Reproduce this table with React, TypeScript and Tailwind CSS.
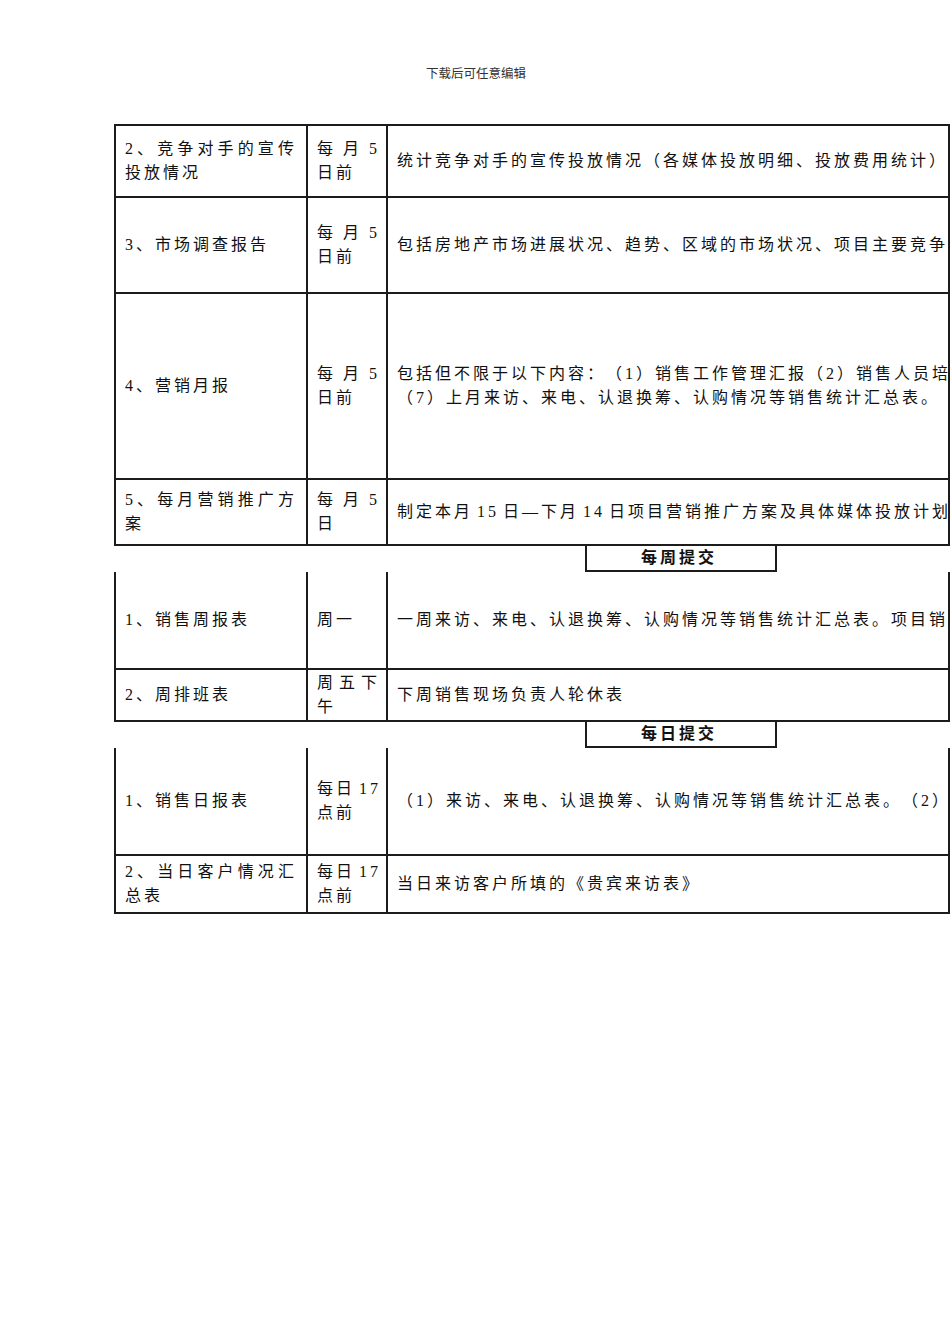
import React from "react";

function J({ t }: { t: string }) {
  return (
    <div className="flex justify-between tracking-normal">
      {Array.from(t).map((c, i) => (
        <span key={i}>{c}</span>
      ))}
    </div>
  );
}

function L({ t }: { t: string }) {
  const parts = t.split(" ");
  return (
    <div className="whitespace-nowrap">
      {parts.map((p, i) => (
        <React.Fragment key={i}>
          {i > 0 && <span className="tracking-normal"> </span>}
          {p}
        </React.Fragment>
      ))}
    </div>
  );
}

type RowProps = {
  h: string;
  c1: React.ReactNode;
  c2: React.ReactNode;
  c3: React.ReactNode;
};

function Row({ h, c1, c2, c3 }: RowProps) {
  return (
    <div className={`flex border-b-2 border-[#1c1c1c] ${h}`}>
      <div className="w-[192px] shrink-0 border-r-2 border-[#1c1c1c] pl-[9px] pr-[12px] flex flex-col justify-center">
        {c1}
      </div>
      <div className="w-[80px] shrink-0 border-r-2 border-[#1c1c1c] pl-[9px] pr-[9px] flex flex-col justify-center">
        {c2}
      </div>
      <div className="flex-1 min-w-0 overflow-hidden pl-[9px] flex flex-col justify-center">
        {c3}
      </div>
    </div>
  );
}

function Tag({ t }: { t: string }) {
  return (
    <div className="ml-[471px] w-[192px] h-[26px] border-l-2 border-r-2 border-b-2 border-[#1c1c1c] flex items-center justify-center font-bold tracking-[3px] text-[16px] leading-[24px] pr-[4px]">
      {t}
    </div>
  );
}

export default function App() {
  return (
    <div className="w-[950px] min-h-[1344px] bg-white text-[#111] font-['Liberation_Serif','Noto_Sans_CJK_SC',serif] overflow-hidden [text-spacing-trim:space-all]">
      <div className="h-[124px] pt-[66px] text-center text-[12.5px] leading-[16px] text-[#333] pl-[2px]">
        下载后可任意编辑
      </div>
      <div className="ml-[114px] w-[836px] text-[16px] leading-[24px] tracking-[3px]">
        <div className="border-l-2 border-r-2 border-t-2 border-[#1c1c1c]">
          <Row
            h="h-[72px]"
            c1={
              <>
                <J t="2、竞争对手的宣传" />
                <L t="投放情况" />
              </>
            }
            c2={
              <>
                <J t="每月5" />
                <L t="日前" />
              </>
            }
            c3={<L t="统计竞争对手的宣传投放情况（各媒体投放明细、投放费用统计）" />}
          />
          <Row
            h="h-[96px]"
            c1={<L t="3、市场调查报告" />}
            c2={
              <>
                <J t="每月5" />
                <L t="日前" />
              </>
            }
            c3={<L t="包括房地产市场进展状况、趋势、区域的市场状况、项目主要竞争对手的销售情况" />}
          />
          <Row
            h="h-[186px]"
            c1={<L t="4、营销月报" />}
            c2={
              <>
                <J t="每月5" />
                <L t="日前" />
              </>
            }
            c3={
              <>
                <L t="包括但不限于以下内容：（1）销售工作管理汇报（2）销售人员培训情况" />
                <L t="（7）上月来访、来电、认退换筹、认购情况等销售统计汇总表。" />
              </>
            }
          />
          <Row
            h="h-[66px]"
            c1={
              <>
                <J t="5、每月营销推广方" />
                <L t="案" />
              </>
            }
            c2={
              <>
                <J t="每月5" />
                <L t="日" />
              </>
            }
            c3={<L t="制定本月 15 日—下月 14 日项目营销推广方案及具体媒体投放计划" />}
          />
        </div>
        <Tag t="每周提交" />
        <div className="border-l-2 border-r-2 border-[#1c1c1c]">
          <Row
            h="h-[98px]"
            c1={<L t="1、销售周报表" />}
            c2={<L t="周一" />}
            c3={<L t="一周来访、来电、认退换筹、认购情况等销售统计汇总表。项目销售进度" />}
          />
          <Row
            h="h-[52px]"
            c1={<L t="2、周排班表" />}
            c2={
              <>
                <J t="周五下" />
                <L t="午" />
              </>
            }
            c3={<L t="下周销售现场负责人轮休表" />}
          />
        </div>
        <Tag t="每日提交" />
        <div className="border-l-2 border-r-2 border-[#1c1c1c]">
          <Row
            h="h-[108px]"
            c1={<L t="1、销售日报表" />}
            c2={
              <>
                <L t="每日 17" />
                <L t="点前" />
              </>
            }
            c3={<L t="（1）来访、来电、认退换筹、认购情况等销售统计汇总表。（2）当日" />}
          />
          <Row
            h="h-[58px]"
            c1={
              <>
                <J t="2、当日客户情况汇" />
                <L t="总表" />
              </>
            }
            c2={
              <>
                <L t="每日 17" />
                <L t="点前" />
              </>
            }
            c3={<L t="当日来访客户所填的《贵宾来访表》" />}
          />
        </div>
      </div>
    </div>
  );
}
